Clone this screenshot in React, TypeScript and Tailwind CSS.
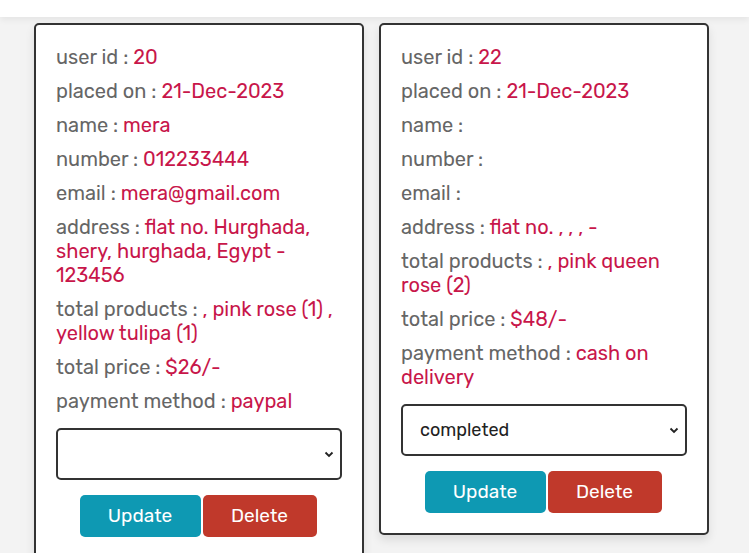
import React from "react";

type Row = { label: string; value: string };

const cards: { rows: Row[]; status: string }[] = [
  {
    rows: [
      { label: "user id", value: "20" },
      { label: "placed on", value: "21-Dec-2023" },
      { label: "name", value: "mera" },
      { label: "number", value: "012233444" },
      { label: "email", value: "mera@gmail.com" },
      { label: "address", value: "flat no. Hurghada, shery, hurghada, Egypt - 123456" },
      { label: "total products", value: ", pink rose (1) , yellow tulipa (1)" },
      { label: "total price", value: "$26/-" },
      { label: "payment method", value: "paypal" },
    ],
    status: "",
  },
  {
    rows: [
      { label: "user id", value: "22" },
      { label: "placed on", value: "21-Dec-2023" },
      { label: "name", value: "" },
      { label: "number", value: "" },
      { label: "email", value: "" },
      { label: "address", value: "flat no. , , , -" },
      { label: "total products", value: ", pink queen rose (2)" },
      { label: "total price", value: "$48/-" },
      { label: "payment method", value: "cash on delivery" },
    ],
    status: "completed",
  },
];

function Card({ rows, status }: { rows: Row[]; status: string }) {
  return (
    <div className="w-[330px] shrink-0 self-start bg-white border-2 border-[#333] rounded-[5px] p-[20px] shadow-[0_5px_10px_rgba(0,0,0,0.1)]">
      <div className="flex flex-col gap-[10px]">
        {rows.map((r, i) => (
          <p key={i} className="text-[20px] leading-[24px] text-[#666]">
            {r.label} : <span className="text-[#c8164a]">{r.value}</span>
          </p>
        ))}
      </div>
      <div className="relative mt-[15px] h-[52px] w-full border-2 border-[#333] rounded-[5px] bg-white flex items-center pl-[17px]">
        <span className="text-[18px] text-[#222]">{status}</span>
        <svg className="absolute right-[6px] top-1/2 -translate-y-1/2" width="10" height="10" viewBox="0 0 10 10">
          <path d="M1.5 3.5 L5 7 L8.5 3.5" fill="none" stroke="#222" strokeWidth="1.8" />
        </svg>
      </div>
      <div className="mt-[15px] flex justify-center gap-[2px] pr-[2px]">
        <button className="h-[42px] w-[121px] rounded-[5px] bg-[#0e99b3] text-white text-[19px]">Update</button>
        <button className="h-[42px] w-[114px] rounded-[5px] bg-[#c0392b] text-white text-[19px]">Delete</button>
      </div>
    </div>
  );
}

export default function App() {
  return (
    <div className="min-h-[553px] bg-[#f3f3f3] font-['Rubik','Open_Sans',sans-serif] overflow-hidden h-[553px]">
      <div className="h-[17px] bg-white shadow-[0_3px_6px_rgba(0,0,0,0.06)]" />
      <div className="flex gap-[15px] pl-[34px] pt-[6px]">
        {cards.map((c, i) => (
          <Card key={i} rows={c.rows} status={c.status} />
        ))}
      </div>
    </div>
  );
}
